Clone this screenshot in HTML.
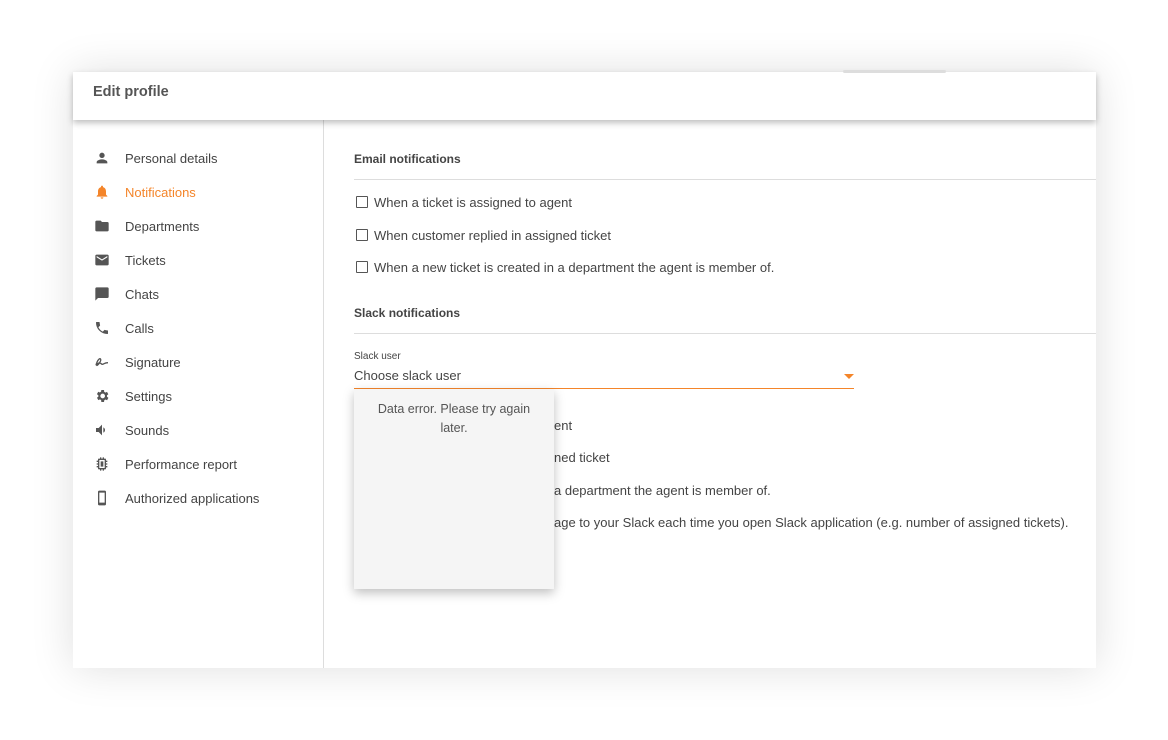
<!DOCTYPE html><html><head><style>
body{margin:0;width:1168px;height:740px;background:#fff;font-family:"Liberation Sans",sans-serif;color:#444;position:relative;overflow:hidden}
.card{position:absolute;left:73px;top:72px;width:1023px;height:596px;background:#fff;box-shadow:0 0 40px rgba(0,0,0,.13)}
.hdr{position:absolute;left:0;top:0;width:1023px;height:48px;background:#fff;box-shadow:0 3px 6px rgba(0,0,0,.25);z-index:2}
.hdr b{position:absolute;left:20px;top:12px;font-size:14.5px;color:#555}
.tab{position:absolute;left:770px;top:-2px;width:103px;height:3px;background:#ddd;border-radius:2px}
.side{position:absolute;left:0;top:48px;width:250px;height:548px;border-right:1px solid #ddd}
.it{position:absolute;left:52px;font-size:13px;line-height:16px}
.ic{position:absolute;left:21px;width:16px;height:16px;margin-top:1px}
.t{position:absolute;font-size:13px;line-height:16px}
.h{position:absolute;left:281px;font-size:12px;font-weight:bold;color:#444}
.ln{position:absolute;left:281px;width:742px;height:1px;background:#ddd}
.cb{position:absolute;left:283px;width:10px;height:10px;border:1px solid #555;border-radius:1px}
.pop{position:absolute;left:281px;top:317px;width:200px;height:200px;background:#f5f5f5;box-shadow:0 4px 10px rgba(0,0,0,.25);text-align:center;font-size:12.5px;line-height:19px;color:#555;z-index:3}
</style></head><body>
<div class="card">
<div class="hdr"><b>Edit profile</b><div class="tab"></div></div>
<div class="side">
<svg class="ic" style="top:29px" viewBox="0 0 24 24"><path fill="#555" d="M12 12a4 4 0 1 0 0-8 4 4 0 0 0 0 8zm0 2c-3 0-8 1.5-8 4v2h16v-2c0-2.5-5-4-8-4z"/></svg><div class="it" style="top:31px">Personal details</div>
<svg class="ic" style="top:63px" viewBox="0 0 24 24"><path fill="#f4852a" d="M12 22a2 2 0 0 0 2-2h-4a2 2 0 0 0 2 2zm6-6v-5c0-3-1.6-5.6-4.5-6.3V4a1.5 1.5 0 0 0-3 0v.7C7.6 5.4 6 8 6 11v5l-2 2v1h16v-1z"/></svg><div class="it" style="top:65px;color:#f4852a">Notifications</div>
<svg class="ic" style="top:97px" viewBox="0 0 24 24"><path fill="#555" d="M10 4H4a2 2 0 0 0-2 2v12a2 2 0 0 0 2 2h16a2 2 0 0 0 2-2V8a2 2 0 0 0-2-2h-8z"/></svg><div class="it" style="top:99px">Departments</div>
<svg class="ic" style="top:131px" viewBox="0 0 24 24"><path fill="#555" d="M20 4H4a2 2 0 0 0-2 2v12a2 2 0 0 0 2 2h16a2 2 0 0 0 2-2V6a2 2 0 0 0-2-2zm0 4l-8 5-8-5V6l8 5 8-5z"/></svg><div class="it" style="top:133px">Tickets</div>
<svg class="ic" style="top:165px" viewBox="0 0 24 24"><path fill="#555" d="M20 2H4a2 2 0 0 0-2 2v18l4-4h14a2 2 0 0 0 2-2V4a2 2 0 0 0-2-2z"/></svg><div class="it" style="top:167px">Chats</div>
<svg class="ic" style="top:199px" viewBox="0 0 24 24"><path fill="#555" d="M6.6 10.8a15 15 0 0 0 6.6 6.6l2.2-2.2c.3-.3.7-.4 1-.2 1.1.4 2.3.6 3.600.6.6 0 1 .4 1 1V20c0 .6-.4 1-1 1A17 17 0 0 1 3 4c0-.6.4-1 1-1h3.5c.6 0 1 .4 1 1 0 1.3.2 2.5.6 3.6.1.3 0 .7-.2 1z"/></svg><div class="it" style="top:201px">Calls</div>
<svg class="ic" style="top:233px" viewBox="0 0 24 24"><path fill="none" stroke="#555" stroke-width="2" d="M3 17c2-8 6-12 7-9s-5 10-6 9 3-5 6-3 2 2 4 1 3-2 7-2"/></svg><div class="it" style="top:235px">Signature</div>
<svg class="ic" style="top:267px" viewBox="0 0 24 24"><path fill="#555" d="M19.4 13a7 7 0 0 0 0-2l2.1-1.6-2-3.5-2.5 1a7 7 0 0 0-1.7-1L15 3h-4l-.4 2.7a7 7 0 0 0-1.7 1l-2.5-1-2 3.5L6.6 11a7 7 0 0 0 0 2l-2.1 1.6 2 3.5 2.5-1a7 7 0 0 0 1.7 1L11 21h4l.4-2.7a7 7 0 0 0 1.7-1l2.5 1 2-3.5zM13 15.5a3.5 3.5 0 1 1 0-7 3.5 3.5 0 0 1 0 7z"/></svg><div class="it" style="top:269px">Settings</div>
<svg class="ic" style="top:301px" viewBox="0 0 24 24"><path fill="#555" d="M3 9v6h4l5 5V4L7 9zm13.5 3A4.5 4.5 0 0 0 14 8v8a4.5 4.5 0 0 0 2.5-4z"/></svg><div class="it" style="top:303px">Sounds</div>
<svg class="ic" style="top:335px" viewBox="0 0 24 24"><path fill="#555" d="M9 2v2H7a1 1 0 0 0-1 1v2H4v2h2v2H4v2h2v2H4v2h2v2a1 1 0 0 0 1 1h2v2h2v-2h2v2h2v-2h2a1 1 0 0 0 1-1v-2h2v-2h-2v-2h2v-2h-2V9h2V7h-2V5a1 1 0 0 0-1-1h-2V2h-2v2h-2V2zM8 6h8v12H8zm2 2v8h4V8z"/></svg><div class="it" style="top:337px">Performance report</div>
<svg class="ic" style="top:369px" viewBox="0 0 24 24"><path fill="#555" d="M16 1H8a2 2 0 0 0-2 2v18a2 2 0 0 0 2 2h8a2 2 0 0 0 2-2V3a2 2 0 0 0-2-2zm0 18H8V4h8z"/></svg><div class="it" style="top:371px">Authorized applications</div>
</div>
<div class="h" style="top:80px">Email notifications</div>
<div class="ln" style="top:107px"></div>
<div class="cb" style="top:124px"></div><div class="t" style="left:301px;top:123px">When a ticket is assigned to agent</div>
<div class="cb" style="top:157px"></div><div class="t" style="left:301px;top:156px">When customer replied in assigned ticket</div>
<div class="cb" style="top:189px"></div><div class="t" style="left:301px;top:188px">When a new ticket is created in a department the agent is member of.</div>
<div class="h" style="top:234px">Slack notifications</div>
<div class="ln" style="top:261px"></div>
<div class="t" style="left:281px;top:279px;font-size:10px;line-height:12px">Slack user</div>
<div class="t" style="left:281px;top:296px">Choose slack user</div>
<div style="position:absolute;left:771px;top:302px;width:0;height:0;border-left:5px solid transparent;border-right:5px solid transparent;border-top:5px solid #f4852a"></div>
<div style="position:absolute;left:281px;top:316px;width:500px;height:1px;background:#f4852a"></div>
<div class="t" style="left:481px;top:346px">ent</div>
<div class="t" style="left:481px;top:378px">ned ticket</div>
<div class="t" style="left:481px;top:411px">a department the agent is member of.</div>
<div class="t" style="left:481px;top:443px">age to your Slack each time you open Slack application (e.g. number of assigned tickets).</div>
<div class="pop"><div style="padding:11px 14px 0">Data error. Please try again later.</div></div>
</div>
</body></html>
